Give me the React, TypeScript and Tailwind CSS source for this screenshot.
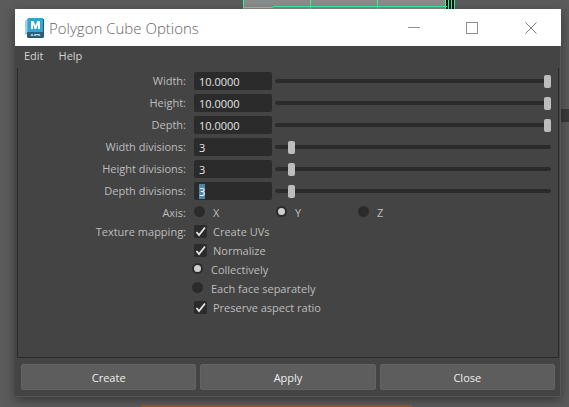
import { useState, type ReactNode } from "react";

type NumberField = {
  id: string;
  label: string;
  value: string;
  max: number;
  slider: number;
};

const numberFields: NumberField[] = [
  { id: "width", label: "Width:", value: "10.0000", max: 10, slider: 10 },
  { id: "height", label: "Height:", value: "10.0000", max: 10, slider: 10 },
  { id: "depth", label: "Depth:", value: "10.0000", max: 10, slider: 10 },
  { id: "width-divisions", label: "Width divisions:", value: "3", max: 60, slider: 3 },
  { id: "height-divisions", label: "Height divisions:", value: "3", max: 60, slider: 3 },
  { id: "depth-divisions", label: "Depth divisions:", value: "3", max: 60, slider: 3 },
];

const labelClass = "w-[168px] shrink-0 text-right";

function Viewport() {
  return (
    <div aria-hidden="true" className="absolute inset-0 -z-10 overflow-hidden">
      <svg className="absolute left-[243px] top-0" width="213" height="10" shapeRendering="crispEdges">
        <rect width="203" height="10" fill="#8b8b8b" />
        <rect x="202" width="10" height="10" fill="#101713" />
        <path d="M.5 0v10M67.500 0v10M134.500 0v10M202.500 0v10M205.500 0v10M208.500 0v10M211.500 0v10M0 7.500h30M30 6.500h174" stroke="#3df29c" />
      </svg>
      <div className="absolute right-0 top-[109px] h-[13px] w-2 bg-[#3b3b3b]" />
      <div className="absolute bottom-0 left-[141px] h-0.5 w-[271px] border-t border-[#79634f] bg-[#a6510f]" />
    </div>
  );
}

function MayaLogo() {
  return (
    <svg width="20" height="20" viewBox="0 0 20 20" aria-hidden="true">
      <path d="M2 1 0 3v14l2-1z" fill="#9ad5e3" />
      <path d="M2 1l2-1v14l-2 2z" fill="#64b9d0" />
      <path d="M3 0h15v14H3z" fill="#35a5cf" />
      <path d="M2 14h16v5H2z" fill="#2a607e" />
      <path d="M18 1h1v18l-1 1H3l-1-1h16z" fill="#245b73" />
      <path d="M6 11V3h2.500l2 4.500 2-4.500H15v8h-2V6.500L11.300 11H9.700L8 6.500V11z" fill="#fff" />
      <path d="M6 18l1-2 1 2M9 18l1-2 1 2M11 16l1 1 1-1M13 18l1-2 1 2" fill="none" stroke="#c5dbe5" />
    </svg>
  );
}

function TitleBar() {
  return (
    <header className="flex h-[37px] items-center bg-white pl-2.5 text-[#666666]">
      <MayaLogo />
      <h1 className="ml-1 flex-1 whitespace-nowrap font-['Open_Sans','Noto_Sans',sans-serif] text-[15px] font-light leading-5">
        Polygon Cube Options
      </h1>
      <div className="flex h-full">
        <button type="button" aria-label="Minimize" className="grid w-[58px] place-items-center">
          <svg width="12" height="12" shapeRendering="crispEdges"><path d="M0 5.500h12" stroke="#909090" /></svg>
        </button>
        <button type="button" aria-label="Maximize" className="grid w-[58px] place-items-center">
          <svg width="12" height="12" shapeRendering="crispEdges"><path d="M.5.5h11v11H.5z" fill="none" stroke="#909090" /></svg>
        </button>
        <button type="button" aria-label="Close window" className="grid w-[60px] place-items-center">
          <svg width="12" height="12"><path d="M.5.5l11 11M11.500.5l-11 11" stroke="#808080" /></svg>
        </button>
      </div>
    </header>
  );
}

function NumberRow({ field }: { field: NumberField }) {
  const [text, setText] = useState(field.value);
  const [slider, setSlider] = useState(field.slider);
  const active = field.id === "depth-divisions";
  return (
    <div className="flex h-[18px] items-center">
      <label htmlFor={field.id} className={labelClass}>{field.label}</label>
      <input
        id={field.id}
        value={text}
        autoFocus={active}
        onFocus={(e) => e.currentTarget.select()}
        onChange={(e) => setText(e.target.value)}
        className="ml-2 h-[18px] w-[78px] rounded-xs bg-[#2b2b2b] px-[5px] pt-px text-[#e4e4e4] outline-none selection:bg-[#5285a6] selection:text-white"
      />
      <input
        type="range"
        aria-label={field.label}
        min={0}
        max={field.max}
        step="any"
        value={slider}
        onChange={(e) => setSlider(Number(e.target.value))}
        className="ml-[3px] h-[13px] min-w-0 flex-1 appearance-none bg-transparent outline-none [&::-webkit-slider-runnable-track]:h-1 [&::-webkit-slider-runnable-track]:rounded-sm [&::-webkit-slider-runnable-track]:bg-[#2b2b2b] [&::-webkit-slider-thumb]:-mt-1 [&::-webkit-slider-thumb]:h-[13px] [&::-webkit-slider-thumb]:w-[7px] [&::-webkit-slider-thumb]:appearance-none [&::-webkit-slider-thumb]:rounded-xs [&::-webkit-slider-thumb]:bg-[#bdbdbd]"
      />
    </div>
  );
}

function Radio({ name, label, checked = false, className }: { name: string; label: string; checked?: boolean; className: string }) {
  return (
    <label className={`flex items-center ${className}`}>
      <input
        type="radio"
        name={name}
        defaultChecked={checked}
        className="mb-0.5 size-[11px] shrink-0 appearance-none rounded-full border-2 border-[#2b2b2b] bg-[#2b2b2b] checked:bg-[#cfcfcf]"
      />
      {label}
    </label>
  );
}

function Check({ label }: { label: string }) {
  return (
    <label className="flex items-center gap-1.5">
      <span className="grid size-[13px] place-items-center">
        <input
          type="checkbox"
          defaultChecked
          className="peer col-start-1 row-start-1 size-[13px] appearance-none rounded-xs bg-[#2b2b2b]"
        />
        <svg className="pointer-events-none invisible col-start-1 row-start-1 peer-checked:visible" width="13" height="13" viewBox="0 0 13 13">
          <path d="M2.500 7l2.500 3L11 2.500" fill="none" stroke="#e6e6e6" strokeWidth="1.800" />
        </svg>
      </span>
      {label}
    </label>
  );
}

function OptionRow({ label, children }: { label?: string; children: ReactNode }) {
  return (
    <div className="flex h-[19px] items-center">
      <span className={labelClass}>{label}</span>
      <div className="flex pl-2">{children}</div>
    </div>
  );
}

export default function App() {
  return (
    <main className="relative isolate flex min-h-screen flex-col bg-[#5b5b5b] pb-2.5 pl-[15px] pr-2 pt-[9px] font-['Open_Sans','Noto_Sans',sans-serif] text-[11px] leading-[14px] text-[#bdbdbd]">
      <Viewport />
      <section className="flex flex-1 flex-col bg-[#444444] shadow-[0_3px_10px_rgba(0,0,0,0.4)]">
        <TitleBar />
        <div className="flex flex-1 flex-col border-b border-r border-[#565656]">
          <nav className="flex h-[22px] items-center gap-[15px] pb-0.5 pl-[9px] text-[#d2d2d2]">
            <button type="button">Edit</button>
            <button type="button">Help</button>
          </nav>
          <form className="flex flex-1 flex-col" onSubmit={(e) => e.preventDefault()}>
            <div className="ml-0.5 mr-px flex-1 border-x border-b border-[#2b2b2b] pb-4 pr-[7px] pt-1">
              <div className="flex flex-col gap-1">
                {numberFields.map((field) => <NumberRow key={field.id} field={field} />)}
              </div>
              <div className="mt-[3px]">
                <OptionRow label="Axis:">
                  <Radio name="axis" label="X" className="w-[82px] gap-2" />
                  <Radio name="axis" label="Y" checked className="w-[82px] gap-2" />
                  <Radio name="axis" label="Z" className="w-[82px] gap-2" />
                </OptionRow>
                <OptionRow label="Texture mapping:"><Check label="Create UVs" /></OptionRow>
                <OptionRow><Check label="Normalize" /></OptionRow>
                <OptionRow><Radio name="normalize" label="Collectively" checked className="-ml-0.5 gap-2" /></OptionRow>
                <OptionRow><Radio name="normalize" label="Each face separately" className="-ml-0.5 gap-2" /></OptionRow>
                <OptionRow><Check label="Preserve aspect ratio" /></OptionRow>
              </div>
            </div>
            <div className="grid grid-cols-3 gap-1 pb-1.5 pl-1.5 pr-[5px] pt-1.5">
              {["Create", "Apply", "Close"].map((name) => (
                <button key={name} type="button" className="h-[26px] rounded-xs border border-[#636363] bg-[#5d5d5d] pt-0.5 text-[#eeeeee]">
                  {name}
                </button>
              ))}
            </div>
          </form>
        </div>
      </section>
    </main>
  );
}
